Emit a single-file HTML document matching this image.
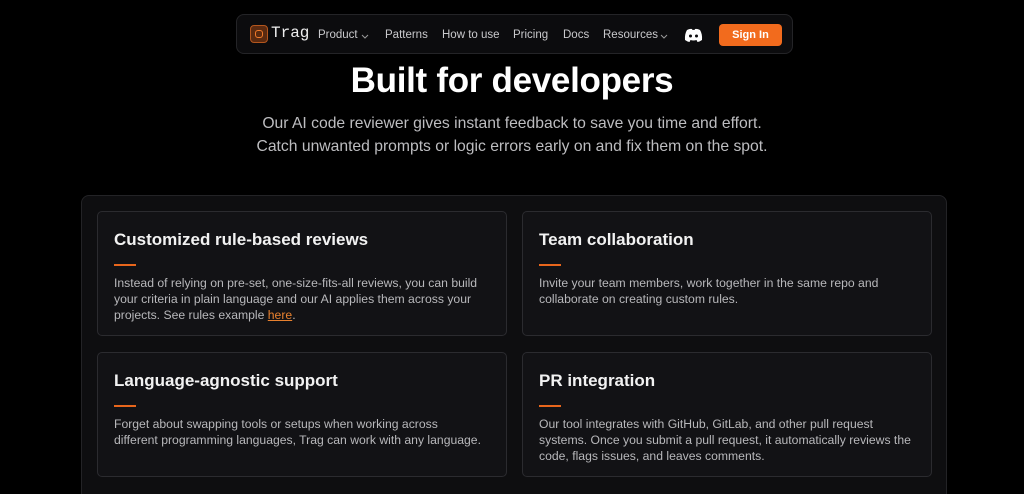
<!DOCTYPE html>
<html><head><meta charset="utf-8"><style>
*{margin:0;padding:0;box-sizing:border-box}
html,body{width:1024px;height:494px;overflow:hidden}
body{background:#000;font-family:"Liberation Sans",sans-serif;color:#fff;position:relative}
.nav{position:absolute;left:236px;top:14px;width:557px;height:40px;background:#0c0c0e;border:1px solid #242427;border-radius:8px}
.nav span{position:absolute;top:14px;font-size:11.5px;color:#c9c9cc}
.nav svg.ch{position:absolute;top:19px}
.logo{position:absolute;left:13px;top:10px;width:18px;height:18px;background:#5a2a10;border-radius:4px;border:1px solid #b4561d}
.logo:after{content:"";position:absolute;left:4px;top:4px;width:8px;height:8px;border:1.5px solid #f07a2a;border-radius:3px;box-sizing:border-box}
.btn{position:absolute;left:482px;top:9px;width:63px;height:22px;background:#f26b1d;border-radius:4px;font-size:11px;font-weight:bold;text-align:center;line-height:22px}
h1{position:absolute;top:61px;width:100%;text-align:center;font-size:35px;font-weight:bold;letter-spacing:-0.3px}
.sub{position:absolute;top:112px;width:100%;text-align:center;font-size:15.7px;line-height:23px;color:#bdbdc0}
.outer{position:absolute;left:81px;top:195px;width:866px;height:320px;background:#0e0e10;border:1px solid #232326;border-radius:8px}
.card{position:absolute;width:410px;height:125px;background:#121215;border:1px solid #2b2b2f;border-radius:5px;padding:18px 16px}
.card h3{font-size:17px;font-weight:bold;color:#f2f2f2}
.card i{display:block;width:22px;height:2px;background:#e8661c;margin:14px 0 9px}
.card p{font-size:12.2px;line-height:16px;color:#b8b8bb;max-width:368px}
.card a{color:#e8812f;text-decoration:underline}
</style></head><body>
<div class="nav">
<div class="logo"></div>
<span style="left:34px;top:9px;font-size:16px;color:#eee;font-family:'Liberation Mono',monospace">Trag</span>
<span style="left:81px">Product</span>
<svg class="ch" style="left:124px" width="8" height="5" viewBox="0 0 8 5"><path d="M1 1L4 4L7 1" stroke="#999" fill="none"/></svg>
<span style="left:148px">Patterns</span>
<span style="left:205px">How to use</span>
<span style="left:276px">Pricing</span>
<span style="left:326px">Docs</span>
<span style="left:366px">Resources</span>
<svg class="ch" style="left:423px" width="8" height="5" viewBox="0 0 8 5"><path d="M1 1L4 4L7 1" stroke="#999" fill="none"/></svg>
<svg style="position:absolute;left:447px;top:13px" width="19" height="14" viewBox="0 0 19 14"><path d="M3 2 Q6 0.5 8 1 L8.5 2 Q9.5 1.8 10.5 2 L11 1 Q13 0.5 16 2 Q18.5 6 18 12 Q16 13.5 13.5 14 L12.5 12 Q9.5 13 6.5 12 L5.5 14 Q3 13.5 1 12 Q0.5 6 3 2Z" fill="#fff"/><circle cx="6.5" cy="8" r="1.5" fill="#0c0c0e"/><circle cx="12.5" cy="8" r="1.5" fill="#0c0c0e"/></svg>
<div class="btn">Sign In</div>
</div>
<h1>Built for developers</h1>
<div class="sub">Our AI code reviewer gives instant feedback to save you time and effort.<br>Catch unwanted prompts or logic errors early on and fix them on the spot.</div>
<div class="outer"></div>
<div class="card" style="left:97px;top:211px"><h3>Customized rule-based reviews</h3><i></i><p>Instead of relying on pre-set, one-size-fits-all reviews, you can build your criteria in plain language and our AI applies them across your projects. See rules example <a>here</a>.</p></div>
<div class="card" style="left:522px;top:211px"><h3>Team collaboration</h3><i></i><p>Invite your team members, work together in the same repo and collaborate on creating custom rules.</p></div>
<div class="card" style="left:97px;top:352px"><h3>Language-agnostic support</h3><i></i><p>Forget about swapping tools or setups when working across different programming languages, Trag can work with any language.</p></div>
<div class="card" style="left:522px;top:352px"><h3>PR integration</h3><i></i><p style="max-width:380px">Our tool integrates with GitHub, GitLab, and other pull request systems. Once you submit a pull request, it automatically reviews the code, flags issues, and leaves comments.</p></div>
</body></html>
